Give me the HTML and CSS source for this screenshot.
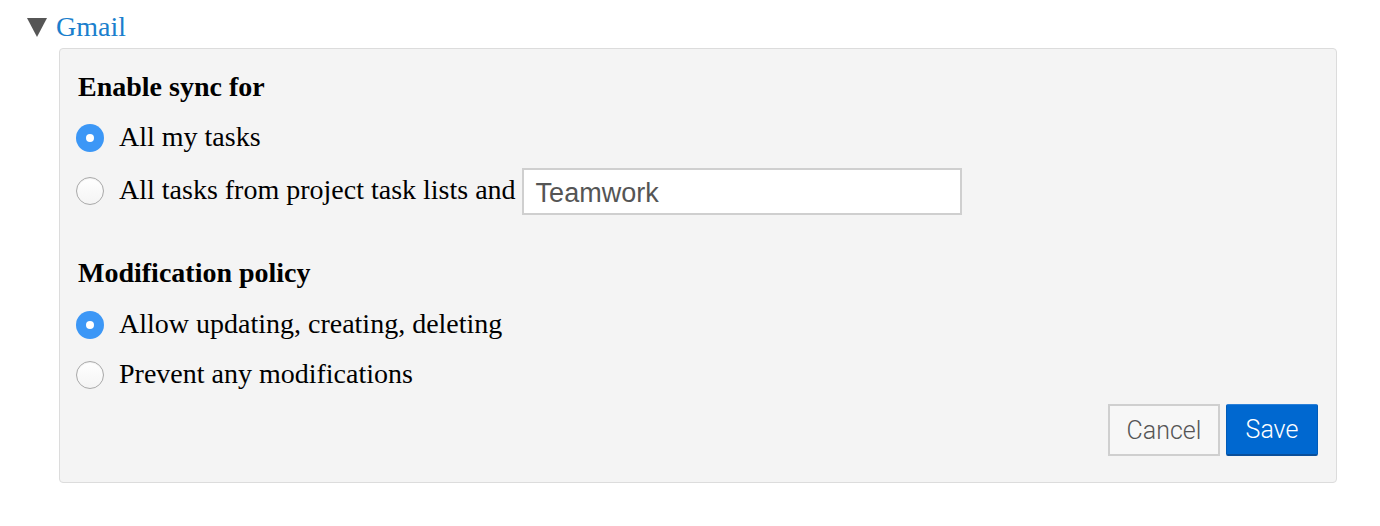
FILE: index.html
```html
<!DOCTYPE html>
<html>
<head>
<meta charset="utf-8">
<link rel="stylesheet" href="styles.css">
</head>
<body>
<div class="section">
  <div class="section-head">
    <span class="caret"></span>
    <a class="section-title" href="#">Gmail</a>
  </div>
  <div class="panel">
    <h3 class="group-title">Enable sync for</h3>
    <label class="option opt-1">
      <span class="radio checked"></span>
      <span class="option-text">All my tasks</span>
    </label>
    <label class="option opt-2">
      <span class="radio"></span>
      <span class="option-text">All tasks from project task lists and</span>
      <span class="text-input">Teamwork</span>
    </label>
    <h3 class="group-title second">Modification policy</h3>
    <label class="option opt-3">
      <span class="radio checked"></span>
      <span class="option-text">Allow updating, creating, deleting</span>
    </label>
    <label class="option opt-4">
      <span class="radio"></span>
      <span class="option-text">Prevent any modifications</span>
    </label>
    <div class="actions">
      <button class="btn btn-cancel">Cancel</button>
      <button class="btn btn-save">Save</button>
    </div>
  </div>
</div>
</body>
</html>
```
FILE: styles.css
```css
html, body {
  margin: 0;
  padding: 0;
  background: #ffffff;
}
body {
  font-family: "Liberation Serif", "Times New Roman", serif;
  font-size: 28px;
  line-height: 32px;
  color: #000;
}
.section {
  padding: 11px 0 0 0;
}
.section-head {
  display: flex;
  align-items: center;
  height: 32px;
  padding-left: 27px;
}
.caret {
  width: 0;
  height: 0;
  border-left: 10px solid transparent;
  border-right: 10px solid transparent;
  border-top: 19px solid #565656;
  margin-right: 9px;
  margin-top: 1px;
}
.section-title {
  color: #1b7fcd;
  text-decoration: none;
}
.panel {
  margin: 5px 0 0 59px;
  box-sizing: border-box;
  width: 1278px;
  height: 435px;
  background: #f4f4f4;
  border: 1px solid #dcdcdc;
  border-radius: 4px;
  padding: 22px 18px 0 16px;
  display: flex;
  flex-direction: column;
}
.group-title {
  margin: 0;
  padding-left: 2px;
  font-size: 28px;
  line-height: 32px;
  font-weight: bold;
}
.group-title.second {
  margin-top: 42px;
}
.option {
  display: flex;
  align-items: center;
  height: 48px;
}
.opt-1 { margin-top: 11px; }
.opt-2 { margin-top: 5px; }
.opt-3 { margin-top: 12px; }
.opt-4 { margin-top: 2px; }
.radio {
  width: 28px;
  height: 28px;
  border-radius: 50%;
  box-sizing: border-box;
  border: 1px solid #a9a9a9;
  background: linear-gradient(#ffffff, #f4f4f4);
  box-shadow: inset 0 1px 1px rgba(0, 0, 0, 0.06);
  margin-right: 15px;
  flex: none;
  position: relative;
}
.radio.checked {
  border: none;
  background: #3c97f6;
  box-shadow: none;
}
.radio.checked::after {
  content: "";
  position: absolute;
  left: 10px;
  top: 10px;
  width: 8px;
  height: 8px;
  border-radius: 50%;
  background: #fff;
}
.option-text {
  position: relative;
  top: -1px;
}
.text-input {
  margin-left: 6px;
  width: 440px;
  height: 47px;
  box-sizing: border-box;
  border: 2px solid #cfcfcf;
  background: #fff;
  font-family: "Liberation Sans", Arial, sans-serif;
  font-size: 27px;
  color: #555;
  padding: 3px 0 0 12px;
  display: flex;
  align-items: center;
}
.actions {
  display: flex;
  justify-content: flex-end;
  gap: 6px;
  margin-top: 5px;
}
.btn {
  height: 52px;
  font-family: Roboto, "Liberation Sans", sans-serif;
  font-weight: 300;
  font-size: 25px;
  box-sizing: border-box;
  padding: 0;
  cursor: pointer;
}
.btn-cancel {
  width: 112px;
  background: #f7f7f7;
  border: 2px solid #cfcfcf;
  color: #555;
}
.btn-save {
  width: 92px;
  background: #0068d0;
  border: 1px solid #005bb8;
  border-top: 1px solid #2b80d8;
  border-bottom: 2px solid #0a4f9a;
  border-radius: 2px;
  color: #fff;
}
```
